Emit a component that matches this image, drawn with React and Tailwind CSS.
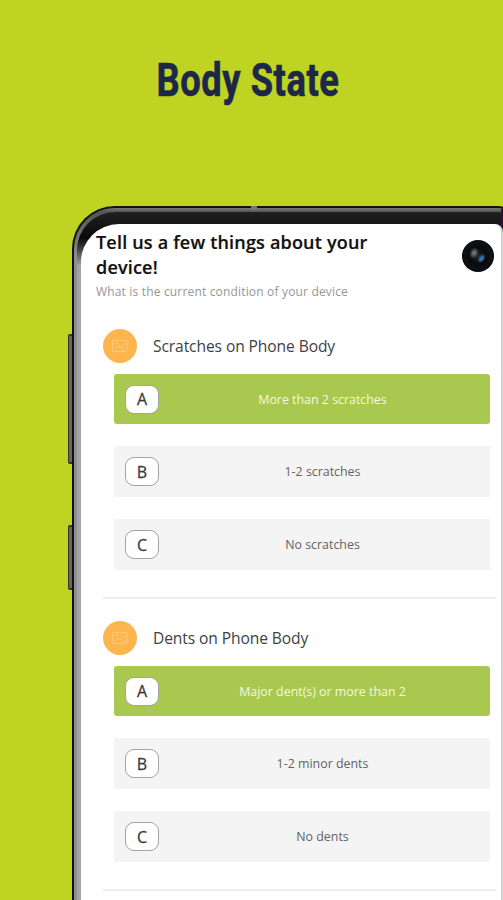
import React, { useState } from "react";
import clsx from "clsx";

const sections = [
  {
    id: "scratches",
    title: "Scratches on Phone Body",
    options: ["More than 2 scratches", "1-2 scratches", "No scratches"],
  },
  {
    id: "dents",
    title: "Dents on Phone Body",
    options: ["Major dent(s) or more than 2", "1-2 minor dents", "No dents"],
  },
];

const letters = ["A", "B", "C"];

const SectionIcon = () => (
  <div className="flex size-[34px] items-center justify-center rounded-full bg-[#fdb54e]">
    <svg width="18" height="14" viewBox="0 0 18 14" fill="none" stroke="#fecb7c">
      <rect x="1.5" y="1.5" width="14.5" height="11" rx="1.5" />
      <path d="M4.5 4.5h3M4 10l3.5-2.5 2.5 1L14 4.5M10.5 10.2h3" />
    </svg>
  </div>
);

const Option = ({ letter, label, selected, onClick }) => (
  <button
    onClick={onClick}
    className={clsx(
      "flex w-[376px] items-center pl-[11px] text-[12.4px]",
      selected
        ? "h-[50px] rounded-[3px] bg-[#a9c84f] text-[#f4f8dc]"
        : "h-[51px] bg-[#f4f4f4] text-[#626262]"
    )}
  >
    <span className="flex h-[29px] w-[34px] shrink-0 items-center justify-center rounded-[9px] border border-[#a3a3a3] bg-white text-[16px] font-medium text-[#3c3c3c] [-webkit-text-stroke:0.3px_#3c3c3c]">
      {letter}
    </span>
    <span className="mr-[4px] flex-1 pt-[2px] text-center">{label}</span>
  </button>
);

const Question = ({ section }) => {
  const [selected, setSelected] = useState(0);

  return (
    <section className="h-[292px]">
      <div className="flex h-[34px] items-center">
        <SectionIcon />
        <h2 className="ml-4 whitespace-nowrap pt-[2px] text-[15.6px] tracking-[-0.1px] text-[#414141]">
          {section.title}
        </h2>
      </div>
      <div className="ml-[11px] mt-[11px] flex flex-col gap-[22px]">
        {section.options.map((label, i) => (
          <Option
            key={label}
            letter={letters[i]}
            label={label}
            selected={i === selected}
            onClick={() => setSelected(i)}
          />
        ))}
      </div>
      <div className="mt-[27px] h-[2px] w-[393px] bg-[#eeecee]" />
    </section>
  );
};

// Front camera
const Camera = () => (
  <svg className="absolute left-[380px] top-[15px]" width="34" height="34" viewBox="0 0 34 34">
    <defs>
      <radialGradient id="lens">
        <stop offset="0" stopColor="#25272b" />
        <stop offset="0.5" stopColor="#08090b" />
        <stop offset="0.85" stopColor="#101114" />
        <stop offset="1" stopColor="#050505" />
      </radialGradient>
      <radialGradient id="glare">
        <stop offset="0" stopColor="#858b91" />
        <stop offset="1" stopColor="#858b91" stopOpacity="0" />
      </radialGradient>
      <radialGradient id="blue">
        <stop offset="0" stopColor="#3d86c6" />
        <stop offset="0.6" stopColor="#245886" />
        <stop offset="1" stopColor="#245886" stopOpacity="0" />
      </radialGradient>
    </defs>
    <circle cx="17" cy="17" r="16" fill="url(#lens)" />
    <ellipse cx="13" cy="14" rx="4.5" ry="6" fill="url(#glare)" transform="rotate(25 13 14)" />
    <ellipse cx="20.5" cy="19.5" rx="3.2" ry="5" fill="url(#blue)" transform="rotate(35 20.5 19.5)" />
  </svg>
);

const SideButton = ({ className }) => (
  <div
    className={clsx(
      "absolute left-[-4px] w-[6px] rounded-l-[2px] border-y-2 border-l border-[#333331] bg-[#666666]",
      className
    )}
  />
);

const App = () => {
  return (
    <div className="h-[900px] w-[503px] overflow-hidden bg-[#bed322] font-['Open_Sans','Noto_Sans',sans-serif]">
      <header className="flex h-[206px] justify-center pt-[45px]">
        <h1 className="h-[70px] origin-center scale-x-[0.79] whitespace-nowrap pr-[10px] font-['Roboto',sans-serif] text-[46px] font-bold leading-[70px] tracking-[0.7px] text-[#1d2749] [-webkit-text-stroke:0.6px_#1d2749]">
          Body State
        </h1>
      </header>

      <div className="relative ml-[72px] h-[760px] w-[446px]">
        <SideButton className="top-[128px] h-[130px]" />
        <SideButton className="top-[319px] h-[65px]" />

        {/* metal frame, black bezel, screen */}
        <div className="relative h-full rounded-tl-[43px] rounded-tr-[20px] bg-[#111111] px-[2px] pt-[2px]">
          <div className="h-full rounded-tl-[41px] rounded-tr-[18px] bg-linear-to-b from-[#777777] from-0% via-[#555555] via-[4px] to-[#8e8e91] to-[50px] pl-[3px] pr-[3px] pt-[4px]">
            <div className="h-full rounded-tl-[38px] rounded-tr-[16px] bg-linear-to-b from-[#202020] from-0% via-[#0b0b0b] via-[26px] to-[#a5a3a8] to-[54px] pl-[4px] pr-[10px] pt-[12px]">
              <main className="relative h-full rounded-tl-[38px] rounded-tr-[8px] border-r-2 border-[#d2d0d5] bg-white pl-[22px] pt-[6px]">
                <Camera />
                <h1 className="-ml-[7px] w-[330px] whitespace-nowrap text-[18px] font-semibold leading-[25px] tracking-[0.19px] text-[#111111] [-webkit-text-stroke:0.2px_#111111]">
                  Tell us a few things about your
                  <br />
                  device!
                </h1>
                <p className="-ml-[7px] mt-[3px] text-[12px] leading-[18px] tracking-[0.17px] text-[#969696]">
                  What is the current condition of your device
                </p>
                <div className="mt-[28px]">
                  {sections.map((section) => (
                    <Question key={section.id} section={section} />
                  ))}
                </div>
              </main>
            </div>
          </div>
          <div className="absolute left-[179px] top-0 h-[4px] w-[6px] bg-[#777777]" />
          <div className="absolute left-[429px] top-[3px] h-[18px] w-[2px] bg-[#3d0b3a]" />
        </div>
      </div>
    </div>
  );
};

export default App;
